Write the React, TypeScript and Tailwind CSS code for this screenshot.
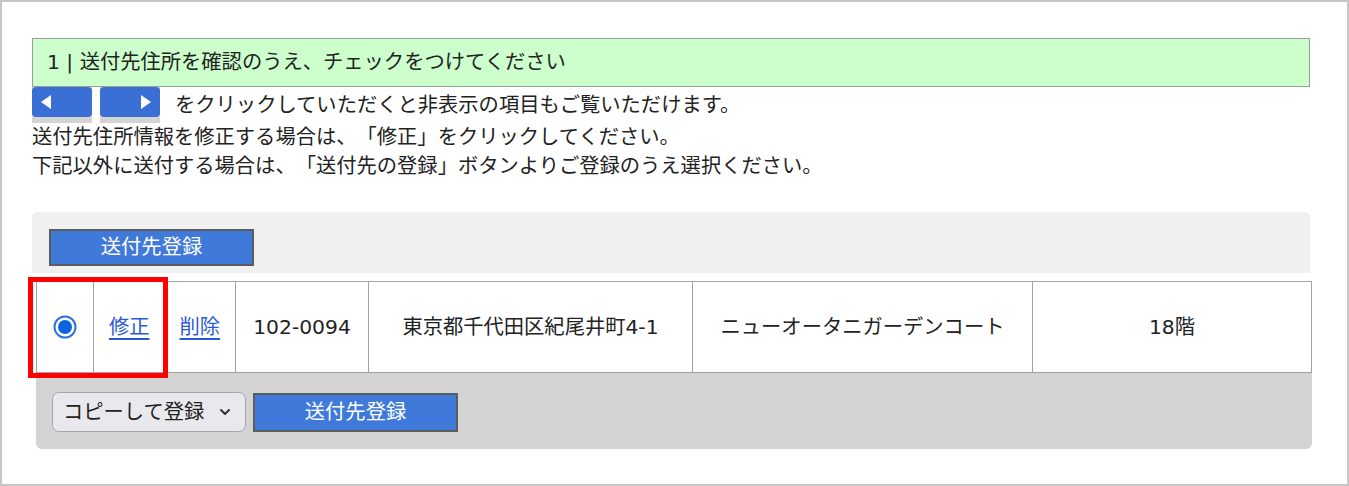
import { ChevronDown } from "lucide-react";

const FONT = { fontFamily: '"DejaVu Sans", "Noto Sans CJK JP", sans-serif' };

const ArrowButton = ({ dir }: { dir: "left" | "right" }) => (
  <div className="w-[60px] h-[36px] bg-[#d4d4d4]">
    <div
      className={`h-[30px] rounded-[4px] bg-[#3a6fd6] flex items-center ${
        dir === "left" ? "justify-start pl-[9px]" : "justify-end pr-[9px]"
      }`}
    >
      <svg width="10" height="14" viewBox="0 0 10 14">
        {dir === "left" ? (
          <polygon points="10,0 10,14 0,7" fill="#fff" />
        ) : (
          <polygon points="0,0 0,14 10,7" fill="#fff" />
        )}
      </svg>
    </div>
  </div>
);

const BlueButton = ({ label, className }: { label: string; className: string }) => (
  <button
    className={`bg-[#3f79d9] border-2 border-[#5c5c5c] text-white text-[20.3px] leading-none flex items-center justify-center ${className}`}
  >
    {label}
  </button>
);

const Radio = () => (
  <svg width="24" height="24" viewBox="0 0 24 24">
    <circle cx="12" cy="12" r="10.5" fill="#fff" stroke="#2b74e0" strokeWidth="2" />
    <circle cx="12" cy="12" r="7" fill="#0b63de" />
  </svg>
);

export default function App() {
  return (
    <div
      className="w-[1349px] h-[486px] border-2 border-[#c6c6c6] bg-white text-[#222] text-[20.3px] [text-spacing-trim:space-all]"
      style={FONT}
    >
      <div className="pl-[30px] pt-[36px]">
        <div className="w-[1278px] h-[49px] border border-[#9c9c9c] bg-[#ccffcc] flex items-center px-[14px]">
          1 | 送付先住所を確認のうえ、チェックをつけてください
        </div>

        <div className="flex items-center h-[36px]">
          <ArrowButton dir="left" />
          <div className="w-[8px]" />
          <ArrowButton dir="right" />
          <span className="ml-[15px] leading-none">
            をクリックしていただくと非表示の項目もご覧いただけます。
          </span>
        </div>
        <p className="leading-[29px]">送付先住所情報を修正する場合は、「修正」をクリックしてください。</p>
        <p className="leading-[29px]">
          下記以外に送付する場合は、「送付先の登録」ボタンよりご登録のうえ選択ください。
        </p>

        <div className="mt-[31px] w-[1278px] h-[61px] bg-[#f0f0f0] rounded-t-[5px] pl-[17px] pt-[17px]">
          <BlueButton label="送付先登録" className="w-[205px] h-[37px]" />
        </div>

        <div className="ml-[4px] mt-[8px] w-[1276px] bg-[#d3d3d3] rounded-b-[6px]">
          <div className="relative">
            <table className="w-full border-collapse bg-white">
              <tbody>
                <tr className="h-[91px]">
                  <td className="w-[57px] border border-[#a3a3a3] text-center align-middle">
                    <div className="flex justify-center">
                      <Radio />
                    </div>
                  </td>
                  <td className="w-[142px] border border-[#a3a3a3] text-center">
                    <span className="text-[#2a5bd7] underline underline-offset-[4px]">修正</span>
                    <span className="inline-block w-[30px]" />
                    <span className="text-[#2a5bd7] underline underline-offset-[4px]">削除</span>
                  </td>
                  <td className="w-[133px] border border-[#a3a3a3] text-center">102-0094</td>
                  <td className="w-[324px] border border-[#a3a3a3] text-center">東京都千代田区紀尾井町4-1</td>
                  <td className="w-[340px] border border-[#a3a3a3] text-center">ニューオータニガーデンコート</td>
                  <td className="border border-[#a3a3a3] text-center">18階</td>
                </tr>
              </tbody>
            </table>
            <div className="absolute left-[-8px] top-[-4px] w-[140px] h-[101px] border-[5px] border-[#ff0000]" />
          </div>

          <div className="flex items-center gap-[7px] pl-[16px] pt-[19px] pb-[17px]">
            <div className="w-[194px] h-[40px] bg-[#e9e9ed] border border-[#a6a6ad] rounded-[7px] flex items-center justify-between pl-[10px] pr-[12px]">
              <span className="leading-none">コピーして登録</span>
              <ChevronDown size={16} strokeWidth={3} className="text-[#333]" />
            </div>
            <BlueButton label="送付先登録" className="w-[205px] h-[39px]" />
          </div>
        </div>
      </div>
    </div>
  );
}
